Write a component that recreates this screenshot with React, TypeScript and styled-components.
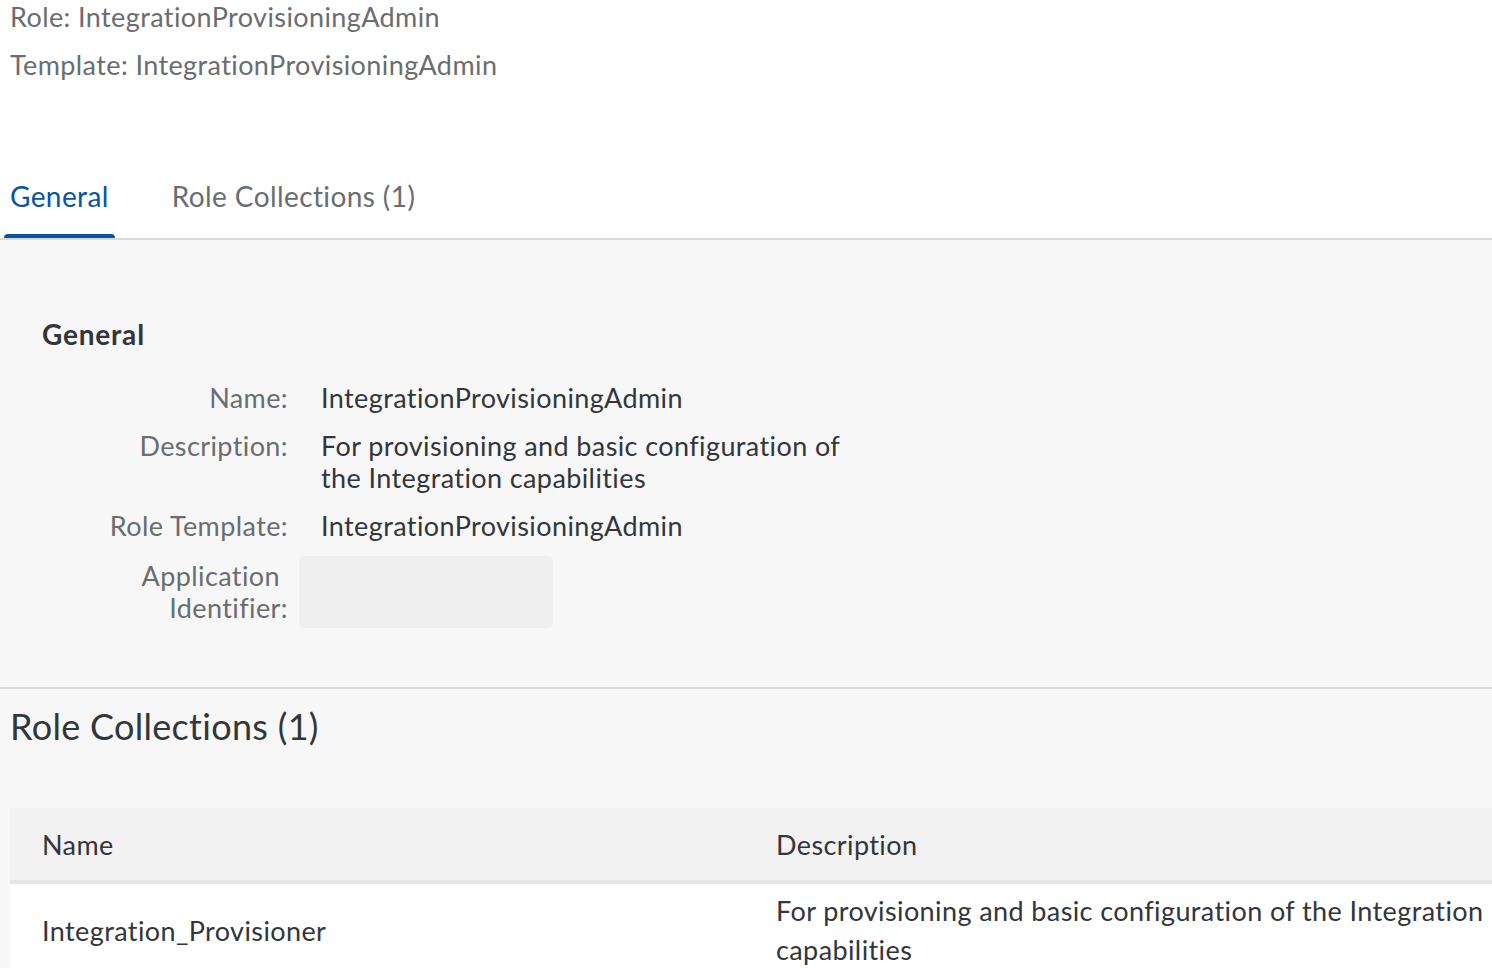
import React from "react";
import styled, { createGlobalStyle } from "styled-components";

const Global = createGlobalStyle`
  html, body { margin: 0; padding: 0; overflow: hidden; background: #f7f7f7; }
  body {
    font-family: Lato, "Noto Sans", sans-serif;
    color: #32363a;
    font-variant-ligatures: none;
    letter-spacing: 0.4px;
  }
`;

const Page = styled.div`
  width: 1492px;
  height: 968px;
  overflow: hidden;
  display: flex;
  flex-direction: column;
`;

const Header = styled.header`
  background: #ffffff;
  padding: 0 10px;
  display: flex;
  flex-direction: column;
  gap: 14px;
`;

const HeaderLine = styled.div`
  font-size: 27px;
  line-height: 34px;
  color: #6a6d70;
`;

const TabBar = styled.nav`
  background: #ffffff;
  padding: 76px 0 0 4px;
  display: flex;
  gap: 51px;
  border-bottom: 2px solid #d9d9d9;
`;

const Tab = styled.div<{ $active?: boolean }>`
  font-size: 28px;
  height: 76px;
  padding: 0 6px 4px;
  display: flex;
  align-items: center;
  color: ${(p) => (p.$active ? "#0854a0" : "#6a6d70")};
  position: relative;
`;

const TabUnderline = styled.span`
  position: absolute;
  left: 0;
  right: 0;
  bottom: 0;
  height: 4px;
  background: #0854a0;
  border-radius: 4px 4px 0 0;
`;

const GeneralSection = styled.section`
  padding: 78px 0 59px 42px;
  border-bottom: 2px solid #d9d9d9;
`;

const SectionHeading = styled.h3`
  margin: 0 0 32px;
  font-size: 28px;
  line-height: 32px;
  font-weight: 700;
  letter-spacing: 0.8px;
  color: #32363a;
`;

const Form = styled.div`
  display: grid;
  grid-template-columns: 246px 1fr;
  column-gap: 11px;
  row-gap: 16px;
`;

const Label = styled.div`
  font-size: 27px;
  line-height: 32px;
  color: #6a6d70;
  text-align: right;
`;

const LabelLine = styled.span<{ $inset?: boolean }>`
  display: block;
  padding-right: ${(p) => (p.$inset ? "8px" : "0")};
`;

const Value = styled.div`
  font-size: 27px;
  line-height: 32px;
  color: #32363a;
  padding-left: 22px;
`;

const WrappedLabel = styled(Label)`
  padding-top: 2px;
`;

const Redacted = styled.div`
  width: 254px;
  height: 72px;
  margin-top: -2px;
  border-radius: 5px;
  background: #efefef;
`;

const CollectionsSection = styled.section`
  padding: 15px 0 0 10px;
  display: flex;
  flex-direction: column;
`;

const CollectionsTitle = styled.h2`
  margin: 0;
  font-size: 36px;
  line-height: 44px;
  font-weight: 400;
  letter-spacing: 0.3px;
  color: #32363a;
`;

const Table = styled.div`
  margin-top: 60px;
  display: flex;
  flex-direction: column;
  width: 1500px;
`;

const TableHead = styled.div`
  display: grid;
  grid-template-columns: 734px 1fr;
  height: 72px;
  align-items: center;
  background: #f2f2f2;
  border-bottom: 4px solid #e5e5e5;
`;

const TableRow = styled.div`
  display: grid;
  grid-template-columns: 734px 1fr;
  align-items: center;
  background: #ffffff;
  padding: 7px 0 10px;
`;

const Cell = styled.div`
  padding-left: 32px;
  font-size: 27px;
  line-height: 39px;
  color: #32363a;
  white-space: nowrap;
`;

export default function App() {
  return (
    <>
      <Global />
      <Page>
        <Header>
          <HeaderLine>Role: IntegrationProvisioningAdmin</HeaderLine>
          <HeaderLine>Template: IntegrationProvisioningAdmin</HeaderLine>
        </Header>
        <TabBar>
          <Tab $active>
            General
            <TabUnderline />
          </Tab>
          <Tab>Role Collections (1)</Tab>
        </TabBar>
        <GeneralSection>
          <SectionHeading>General</SectionHeading>
          <Form>
            <Label>Name:</Label>
            <Value>IntegrationProvisioningAdmin</Value>
            <Label>Description:</Label>
            <Value>
              For provisioning and basic configuration of
              <br />
              the Integration capabilities
            </Value>
            <Label>Role Template:</Label>
            <Value>IntegrationProvisioningAdmin</Value>
            <WrappedLabel>
              <LabelLine $inset>Application</LabelLine>
              <LabelLine>Identifier:</LabelLine>
            </WrappedLabel>
            <Redacted />
          </Form>
        </GeneralSection>
        <CollectionsSection>
          <CollectionsTitle>Role Collections (1)</CollectionsTitle>
          <Table>
            <TableHead>
              <Cell>Name</Cell>
              <Cell>Description</Cell>
            </TableHead>
            <TableRow>
              <Cell>Integration_Provisioner</Cell>
              <Cell>
                For provisioning and basic configuration of the Integration
                <br />
                capabilities
              </Cell>
            </TableRow>
          </Table>
        </CollectionsSection>
      </Page>
    </>
  );
}
